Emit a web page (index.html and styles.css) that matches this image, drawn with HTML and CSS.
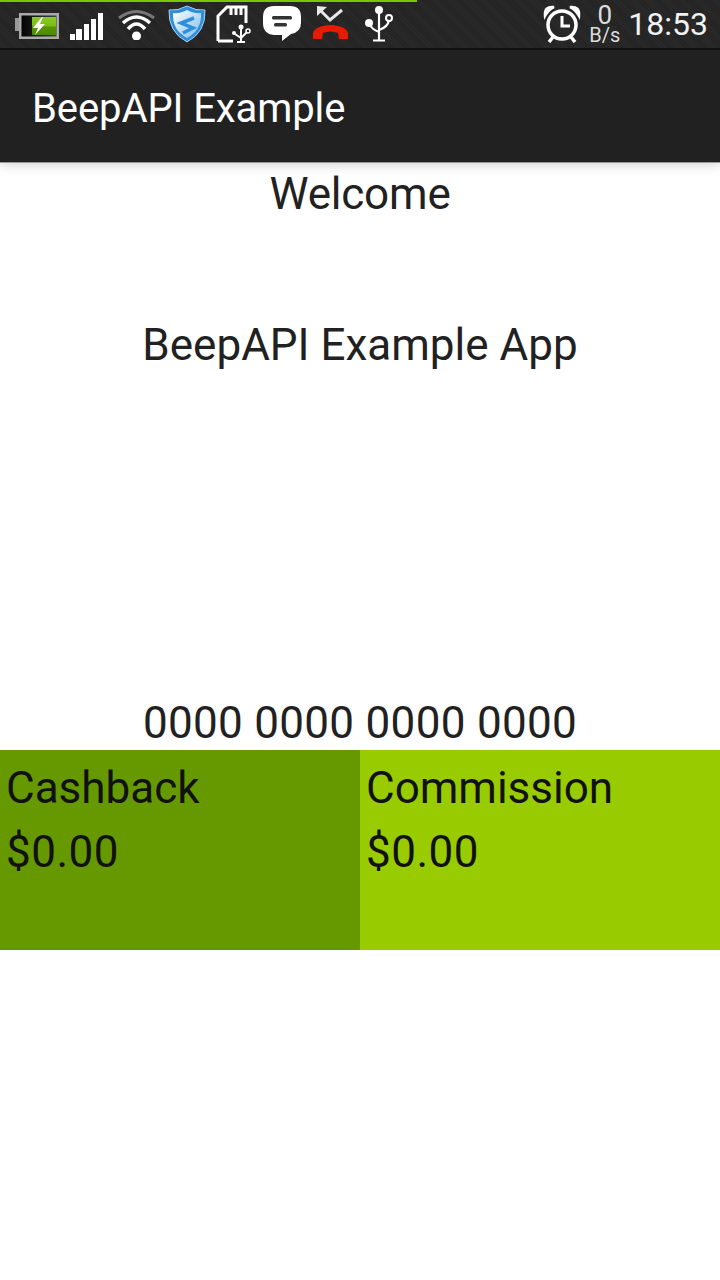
FILE: index.html
```html
<!DOCTYPE html>
<html>
    <head>
        <title>BeepAPI Example</title>
        <link rel="stylesheet" href="styles.css">
    </head>
    <body>
        <div class="status-bar">
            <div class="progress"></div>
            <div class="status-left">
                <svg class="ic-battery" width="44" height="30" viewBox="0 0 44 30">
                    <defs>
                        <linearGradient id="batt-empty" x1="0" y1="0" x2="1" y2="0">
                            <stop offset="0" stop-color="#000"/>
                            <stop offset="1" stop-color="#444"/>
                        </linearGradient>
                        <linearGradient id="batt" x1="0" y1="0" x2="0" y2="1">
                            <stop offset="0" stop-color="#8ccc22"/>
                            <stop offset="0.5" stop-color="#7abc18"/>
                            <stop offset="0.55" stop-color="#559800"/>
                            <stop offset="1" stop-color="#4a8c00"/>
                        </linearGradient>
                        <linearGradient id="shield-fill" x1="0" y1="0" x2="1" y2="1">
                            <stop offset="0" stop-color="#ffffff"/>
                            <stop offset="1" stop-color="#7dbdec"/>
                        </linearGradient>
                    </defs>
                    <rect x="0" y="9" width="4" height="13" fill="#999"/>
                    <rect x="5.250" y="5.250" width="37.500" height="23.500" fill="url(#batt-empty)" stroke="#aaa" stroke-width="2.500"/>
                    <rect x="17" y="8" width="24" height="18" fill="url(#batt)"/>
                    <polygon points="27,8 18,19 23,19 20,26 30,15 25,15 28,8" fill="#fff"/>
                </svg>
                <svg class="ic-signal" width="33" height="32" viewBox="0 0 33 32">
                    <rect x="0" y="26" width="5" height="6" fill="#fff"/>
                    <rect x="6" y="21" width="6" height="11" fill="#fff"/>
                    <rect x="14" y="16" width="5" height="16" fill="#fff"/>
                    <rect x="21" y="11" width="5" height="21" fill="#fff"/>
                    <rect x="28" y="5" width="5" height="27" fill="#fff"/>
                </svg>
                <svg class="ic-wifi" width="40" height="32" viewBox="0 0 40 32">
                    <path d="M2 10 Q19.500 -3 37 10" fill="none" stroke="#777" stroke-width="3"/>
                    <path d="M6 15 Q19.500 3 33 15" fill="none" stroke="#fff" stroke-width="3.500"/>
                    <path d="M11 21 Q19.500 11 28 21" fill="none" stroke="#fff" stroke-width="3.500"/>
                    <circle cx="19.500" cy="28" r="4.500" fill="#fff"/>
                </svg>
                <svg class="ic-shield" width="38" height="38" viewBox="0 0 38 38">
                    <path d="M19 1 Q28 6 37 5 Q38 27 19 37 Q0 27 1 5 Q10 6 19 1 Z" fill="#2f8fdc" stroke="#a9d3f2" stroke-width="1"/>
                    <path d="M19 5 Q27 9 33 8 Q34 25 19 33 Q4 25 5 8 Q11 9 19 5 Z" fill="url(#shield-fill)"/>
                    <path d="M26 13 L13 18 L25 23 L15 28" fill="none" stroke="#2f8fdc" stroke-width="3.500"/>
                </svg>
                <svg class="ic-sd" width="36" height="38" viewBox="0 0 36 38">
                    <path d="M2 36 V11 L11 2 H30 V18 M17 36 H2" fill="none" stroke="#fff" stroke-width="3"/>
                    <path d="M15 3 V10 M20 3 V10 M25 3 V10" stroke="#fff" stroke-width="3"/>
                    <circle cx="25" cy="22" r="2.500" fill="#fff"/>
                    <path d="M25 22 V37 M25 33 L19 29 M25 33 L31 27 M21 37 H29" fill="none" stroke="#fff" stroke-width="2"/>
                    <circle cx="18" cy="28" r="2" fill="#fff"/>
                    <circle cx="32" cy="26" r="2" fill="none" stroke="#fff" stroke-width="1.500"/>
                </svg>
                <svg class="ic-chat" width="40" height="38" viewBox="0 0 40 38">
                    <path d="M12 1 H28 Q39 1 39 12 V18 Q39 27 29 29 L20 36 V30 H12 Q1 29 1 18 V12 Q1 1 12 1 Z" fill="#fff"/>
                    <rect x="10" y="11" width="20" height="3.500" rx="1.500" fill="#333"/>
                    <rect x="12" y="18" width="13" height="3.500" rx="1.500" fill="#333"/>
                </svg>
                <svg class="ic-missed" width="36" height="36" viewBox="0 0 36 36">
                    <path d="M7 4 L17 14 L29 4" fill="none" stroke="#e8e8e8" stroke-width="3"/>
                    <polygon points="4,0 14,1 4,10" fill="#e8e8e8"/>
                    <path d="M0 33 V27 Q2 20 17.500 19 Q33 20 35 27 V33 H26 L25 27 Q17.500 24 10 27 L9 33 Z" fill="#e81a00"/>
                </svg>
                <svg class="ic-usb" width="28" height="36" viewBox="0 0 28 36">
                    <circle cx="14" cy="4" r="4" fill="#fff"/>
                    <circle cx="4" cy="17" r="4" fill="#fff"/>
                    <circle cx="24" cy="12" r="3" fill="none" stroke="#fff" stroke-width="2"/>
                    <path d="M14 4 V34 M4 17 Q6 23 14 26 M24 14 Q23 21 14 24 M8 34.500 H20" fill="none" stroke="#fff" stroke-width="2.200"/>
                </svg>
            </div>
            <div class="status-right">
                <svg class="ic-alarm" width="38" height="38" viewBox="0 0 38 38">
                    <circle cx="19" cy="20" r="14" fill="none" stroke="#fff" stroke-width="3.500"/>
                    <path d="M19 11 V21 H27" fill="none" stroke="#fff" stroke-width="3"/>
                    <path d="M2 11 Q1 1 11 2 Q6 4 2 11 Z M36 11 Q37 1 27 2 Q32 4 36 11 Z" fill="#fff" stroke="#fff" stroke-width="2.500"/>
                    <path d="M10 32 L6 37 M28 32 L32 37" stroke="#fff" stroke-width="3.500"/>
                </svg>
                <div class="net-speed">
                    <span class="net-value">0</span>
                    <span class="net-unit">B/s</span>
                </div>
                <span class="clock">18:53</span>
            </div>
        </div>
        <div class="action-bar">BeepAPI Example</div>
        <div class="content">
            <div class="welcome">Welcome</div>
            <div class="app-name">BeepAPI Example App</div>
            <div class="card-number">0000 0000 0000 0000</div>
            <div class="tiles">
                <div class="tile tile-dark">
                    <div class="tile-label">Cashback</div>
                    <div class="tile-value">$0.00</div>
                </div>
                <div class="tile tile-light">
                    <div class="tile-label">Commission</div>
                    <div class="tile-value">$0.00</div>
                </div>
            </div>
        </div>
    </body>
</html>
```
FILE: styles.css
```css
html, body {
    margin: 0;
    padding: 0;
}
body {
    width: 720px;
    height: 1280px;
    overflow: hidden;
    background: #fff;
    font-family: Roboto, sans-serif;
    color: #212121;
}

.status-bar {
    position: relative;
    height: 48px;
    display: flex;
    justify-content: space-between;
    align-items: center;
    background: repeating-linear-gradient(45deg, #2a2a2a 0, #2a2a2a 1px, #232323 1px, #232323 2px);
    border-bottom: 2px solid #111;
}
.progress {
    position: absolute;
    left: 0;
    top: 0;
    width: 417px;
    height: 2px;
    background: #7fc400;
}
.status-left {
    display: flex;
    align-items: center;
    padding-left: 15px;
}
.ic-signal { margin-left: 11px; }
.ic-wifi { margin-left: 14px; }
.ic-shield { margin-left: 11px; }
.ic-sd { margin-left: 10px; }
.ic-chat { margin-left: 10px; }
.ic-missed { margin-left: 11px; }
.ic-usb { margin-left: 16px; }

.status-right {
    display: flex;
    align-items: center;
    padding-right: 12px;
}
.net-speed {
    display: flex;
    flex-direction: column;
    align-items: center;
    margin-left: 8px;
    color: #ddd;
}
.net-value {
    font-size: 26px;
    line-height: 22px;
}
.net-unit {
    font-size: 20px;
    line-height: 18px;
}
.clock {
    margin-left: 8px;
    font-size: 32px;
    color: #f2f2f2;
}

.action-bar {
    height: 112px;
    line-height: 118px;
    padding-left: 32px;
    background: #212121;
    color: #fff;
    font-size: 40px;
    letter-spacing: -0.1px;
    box-shadow: 0 1px 0 #999, 0 2px 12px rgba(0, 0, 0, 0.2);
}

.content {
    text-align: center;
    font-size: 44px;
}
.welcome {
    height: 62px;
    line-height: 64px;
    letter-spacing: -0.2px;
}
.app-name {
    height: 62px;
    margin-top: 90px;
    line-height: 62px;
}
.card-number {
    height: 56px;
    margin-top: 318px;
    line-height: 58px;
    letter-spacing: 0.3px;
}
.tiles {
    display: flex;
    height: 200px;
    text-align: left;
}
.tile {
    width: 360px;
    padding: 6px;
    box-sizing: border-box;
    color: #111;
}
.tile-dark { background: #669900; }
.tile-light { background: #99cc00; }
.tile-label,
.tile-value {
    height: 64px;
    line-height: 64px;
}
.tile-value {
    letter-spacing: 0.5px;
}
```
